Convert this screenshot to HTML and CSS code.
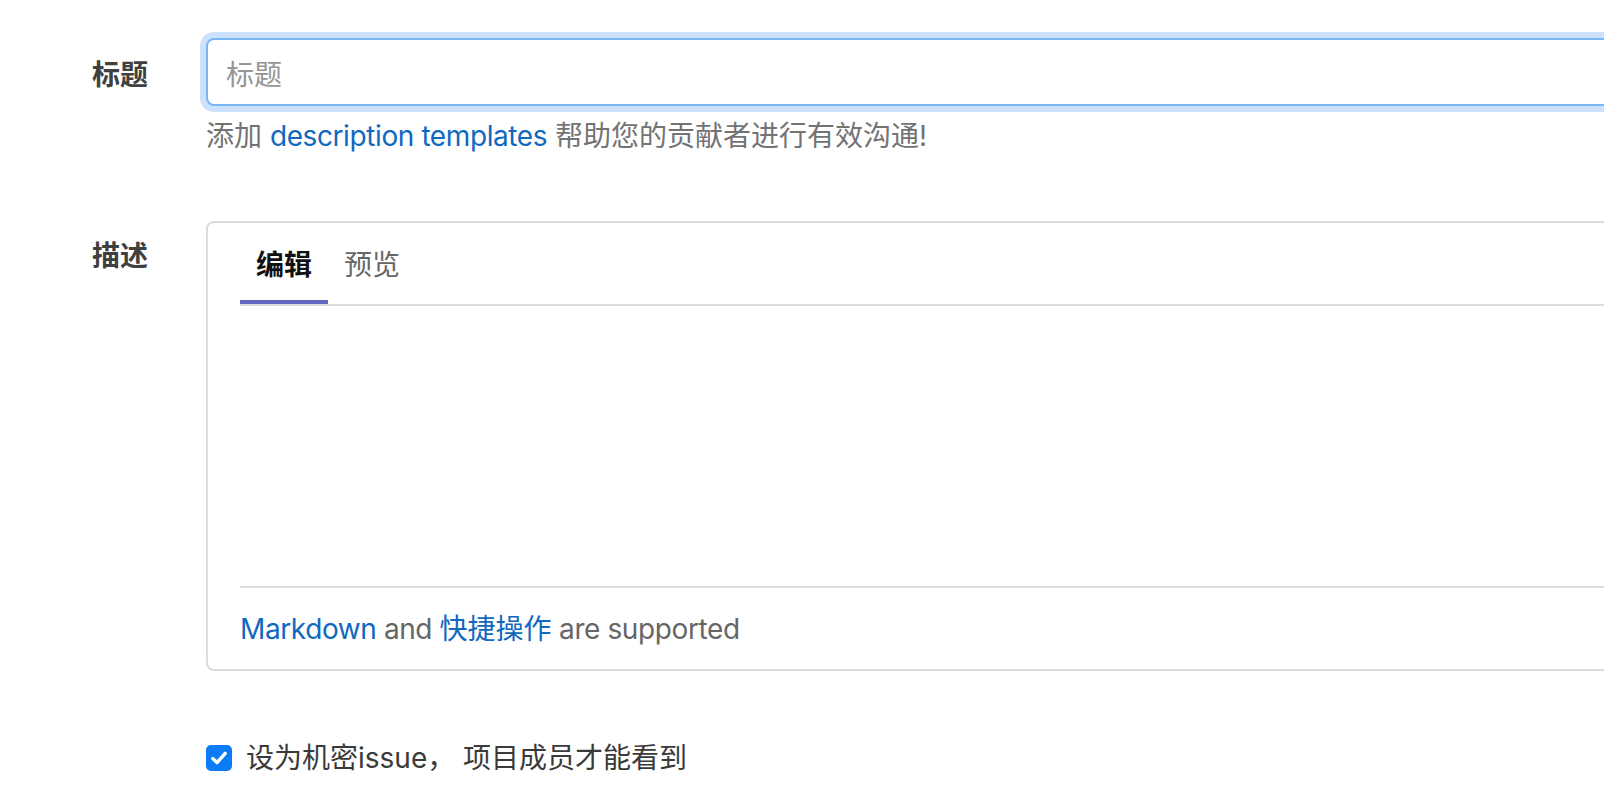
FILE: index.html
```html
<!DOCTYPE html>
<html lang="zh-CN">
<head>
<meta charset="utf-8">
<title>New issue</title>
<link rel="stylesheet" href="styles.css">
</head>
<body>
<form class="issue-form">
  <div class="form-row">
    <label class="form-label label-title" for="title">标题</label>
    <div class="form-field">
      <input id="title" class="title-input" type="text" placeholder="标题">
      <p class="form-help">添加 <a href="#" class="link latin">description templates</a> 帮助您的贡献者进行有效沟通!</p>
    </div>
  </div>

  <div class="form-row row-desc">
    <label class="form-label">描述</label>
    <div class="form-field">
      <div class="md-area">
        <div class="md-header">
          <span class="md-tab active">编辑</span>
          <span class="md-tab">预览</span>
        </div>
        <div class="md-body"></div>
        <div class="md-footer">
          <a href="#" class="link latin">Markdown</a><span class="latin"> and </span><a href="#" class="link">快捷操作</a><span class="latin"> are supported</span>
        </div>
      </div>
    </div>
  </div>

  <div class="form-row row-check">
    <div class="form-label"></div>
    <div class="form-field">
      <label class="check">
        <span class="check-box">
          <svg width="26" height="26" viewBox="0 0 26 26"><path d="M6.8 13.6 L11 17.6 L19.2 8.4" fill="none" stroke="#fff" stroke-width="3.4" stroke-linecap="round" stroke-linejoin="round"/></svg>
        </span>
        <span class="check-text">设为机密issue， 项目成员才能看到</span>
      </label>
    </div>
  </div>
</form>
</body>
</html>
```

FILE: styles.css
```css
html, body {
  margin: 0;
  padding: 0;
  background: #ffffff;
  overflow: hidden;
}

body {
  width: 1604px;
  height: 800px;
  font-family: "Inter", "Noto Sans CJK SC", sans-serif;
  font-size: 28px;
  line-height: 40px;
  color: #333333;
}

.latin {
  letter-spacing: -0.4px;
}

.issue-form {
  padding: 38px 0 0 92px;
}

.form-row {
  display: grid;
  grid-template-columns: 114px 1500px;
}

.form-label {
  font-weight: 700;
  color: #404040;
  padding-top: 14px;
  line-height: 40px;
}

.label-title {
  padding-top: 17px;
}

.form-field {
  min-width: 0;
}

.title-input {
  display: block;
  box-sizing: border-box;
  width: 100%;
  height: 68px;
  margin: 0;
  padding: 6px 18px 0;
  border: 2px solid #78b6f5;
  border-radius: 8px;
  box-shadow: 0 0 0 6px #cbe1fc;
  outline: none;
  font-family: inherit;
  font-size: 28px;
  color: #333;
  background: #fff;
}

.title-input::placeholder {
  color: #959595;
}

.form-help {
  margin: 10px 0 0;
  color: #737373;
}

.link {
  color: #1068bf;
  text-decoration: none;
}

.row-desc {
  margin-top: 65px;
}

.row-desc .form-label {
  padding-top: 15px;
}

.md-area {
  border: 2px solid #dcdcdc;
  border-radius: 8px;
}

.md-header {
  display: flex;
  margin: 0 32px;
  border-bottom: 2px solid #dbdbdb;
}

.md-tab {
  padding: 22px 16px 15px;
  border-bottom: 4px solid transparent;
  color: #666666;
}

.md-tab.active {
  color: #111111;
  font-weight: 700;
  border-bottom-color: #6666c4;
}

.md-body {
  height: 280px;
}

.md-footer {
  margin: 0 32px;
  border-top: 2px solid #dbdbdb;
  padding: 21px 0 20px;
  color: #666666;
}

.row-check {
  margin-top: 67px;
}

.check {
  display: flex;
  align-items: center;
  gap: 14px;
  color: #3a3a3a;
}

.check-box {
  display: flex;
  width: 26px;
  height: 26px;
  border-radius: 5px;
  background: #0b7bf7;
}
```
